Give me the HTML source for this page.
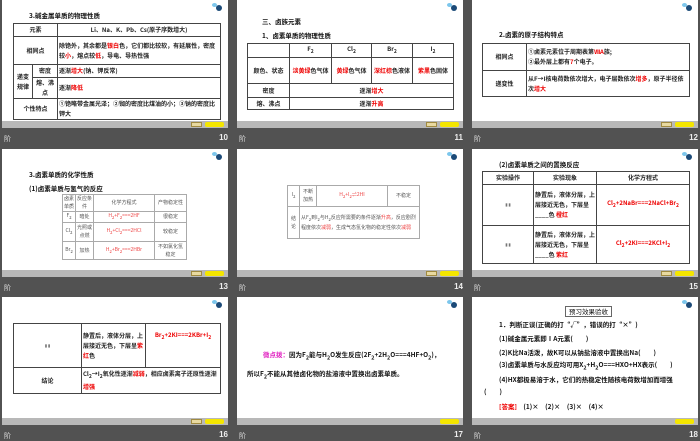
<!DOCTYPE html>
<html><head><meta charset="utf-8">
<style>
*{margin:0;padding:0;box-sizing:border-box}
body{width:700px;height:437px;background:#525252;position:relative;overflow:hidden;font-family:"Liberation Sans","Noto Sans CJK SC",sans-serif;}
.s{position:absolute;width:226px;height:128px;background:#fff;overflow:hidden}
.bar{position:absolute;left:0;bottom:0;width:100%;height:7px;background:#b8b8b8}
.b1{position:absolute;right:26px;bottom:1px;width:11px;height:5px;background:#e8d9a0;border:1px solid #a08a40}
.b2{position:absolute;right:4px;bottom:1px;width:19px;height:5px;background:#f4e600;border-radius:2px}
.ic{position:absolute;right:6px;top:5px;width:6px;height:6px;border-radius:50%;background:#1b4a78}
.ic2{position:absolute;right:11px;top:3px;width:5px;height:4px;border-radius:50%;background:#7cc6ec}
.lb{position:absolute;color:#ddd;font-size:7px}
.nm{position:absolute;color:#eee;font-size:8px;font-weight:bold;text-align:right;width:30px}
.t{position:absolute;font-size:6.5px;line-height:1;font-weight:bold;color:#111;white-space:nowrap;font-family:"Noto Sans CJK SC",sans-serif}
table{position:absolute;border-collapse:collapse;font-size:6px;font-weight:bold;color:#222;font-family:"Noto Sans CJK SC",sans-serif}
td{border:1px solid #444;text-align:center;line-height:10px;padding:0 1px}
.r{color:#e00;font-weight:bold}
.l{text-align:left}
.thin td{border:1px solid #aaa;color:#555;font-size:5px;font-weight:normal;line-height:8px}
</style></head><body>

<!-- slide 10 -->
<div class="s" style="left:2px;top:0">
<div class="ic2"></div><div class="ic"></div>
<div class="t" style="left:27px;top:12px">3.碱金属单质的物理性质</div>
<table style="left:11px;top:23px;width:208px;height:95px">
<tr style="height:13px"><td colspan="2" style="width:50px">元素</td><td>Li、Na、K、Pb、Cs(原子序数增大)</td></tr>
<tr style="height:28px"><td colspan="2">相同点</td><td class="l">除铯外，其余都是<span class="r">银白</span>色，它们都比较软，有延展性，密度较<span class="r">小</span>，熔点较<span class="r">低</span>，导电、导热性强</td></tr>
<tr style="height:13px"><td rowspan="2" style="width:19px">递变规律</td><td>密度</td><td class="l">逐渐<span class="r">增大</span>(钠、钾反常)</td></tr>
<tr style="height:13px"><td>熔、沸点</td><td class="l">逐渐<span class="r">降低</span></td></tr>
<tr><td colspan="2">个性特点</td><td class="l">①铯略带金属光泽；②铷的密度比煤油的小；③钠的密度比钾大</td></tr>
</table>
<div class="bar"><div class="b1"></div><div class="b2"></div></div>
</div>
<div class="lb" style="left:4px;top:134px">阶</div><div class="nm" style="left:198px;top:133px">10</div>

<!-- slide 11 -->
<div class="s" style="left:237px;top:0">
<div class="ic2"></div><div class="ic"></div>
<div class="t" style="left:25px;top:18px">三、卤族元素</div>
<div class="t" style="left:25px;top:32px">1、卤素单质的物理性质</div>
<table style="left:10px;top:43px;width:207px;height:67px">
<tr style="height:14px"><td style="width:42px"></td><td style="width:42px">F<sub>2</sub></td><td style="width:40px">Cl<sub>2</sub></td><td style="width:41px">Br<sub>2</sub></td><td>I<sub>2</sub></td></tr>
<tr style="height:26px"><td>颜色、状态</td><td><span class="r">淡黄绿</span>色气体</td><td><span class="r">黄绿</span>色气体</td><td><span class="r">深红棕</span>色液体</td><td><span class="r">紫黑</span>色固体</td></tr>
<tr style="height:14px"><td>密度</td><td colspan="4">逐渐<span class="r">增大</span></td></tr>
<tr><td>熔、沸点</td><td colspan="4">逐渐<span class="r">升高</span></td></tr>
</table>
<div class="bar"><div class="b1"></div><div class="b2"></div></div>
</div>
<div class="lb" style="left:239px;top:134px">阶</div><div class="nm" style="left:433px;top:133px">11</div>

<!-- slide 12 -->
<div class="s" style="left:472px;top:0">
<div class="ic2"></div><div class="ic"></div>
<div class="t" style="left:27px;top:31px">2.卤素的原子结构特点</div>
<table style="left:10px;top:43px;width:208px;height:54px">
<tr style="height:27px"><td style="width:44px">相同点</td><td class="l">①卤素元素位于周期表第<span class="r">ⅦA</span>族;<br>②最外层上都有<span class="r">7</span>个电子。</td></tr>
<tr><td>递变性</td><td class="l">从F→I核电荷数依次增大，电子层数依次<span class="r">增多</span>，原子半径依次<span class="r">增大</span></td></tr>
</table>
<div class="bar"><div class="b1"></div><div class="b2"></div></div>
</div>
<div class="lb" style="left:474px;top:134px">阶</div><div class="nm" style="left:668px;top:133px">12</div>

<!-- slide 13 -->
<div class="s" style="left:2px;top:149px">
<div class="ic2"></div><div class="ic"></div>
<div class="t" style="left:27px;top:22px">3.卤素单质的化学性质</div>
<div class="t" style="left:27px;top:36px">(1)卤素单质与氢气的反应</div>
<table class="thin" style="left:60px;top:45px;width:125px;height:66px">
<tr style="height:16px"><td style="width:13px">卤素单质</td><td style="width:18px">反应条件</td><td style="width:61px">化学方程式</td><td>产物稳定性</td></tr>
<tr style="height:11px"><td>F<sub>2</sub></td><td>暗处</td><td style="color:#e44">H<sub>2</sub>+F<sub>2</sub>===2HF</td><td>很稳定</td></tr>
<tr style="height:19px"><td>Cl<sub>2</sub></td><td>光照或点燃</td><td style="color:#e44">H<sub>2</sub>+Cl<sub>2</sub>===2HCl</td><td>较稳定</td></tr>
<tr><td>Br<sub>2</sub></td><td>加热</td><td style="color:#e44">H<sub>2</sub>+Br<sub>2</sub>===2HBr</td><td>不如氯化氢稳定</td></tr>
</table>
<div class="bar"><div class="b1"></div><div class="b2"></div></div>
</div>
<div class="lb" style="left:4px;top:283px">阶</div><div class="nm" style="left:198px;top:282px">13</div>

<!-- slide 14 -->
<div class="s" style="left:237px;top:149px">
<div class="ic2"></div><div class="ic"></div>
<table class="thin" style="left:50px;top:36px;width:133px;height:54px">
<tr style="height:21px"><td style="width:12px">I<sub>2</sub></td><td style="width:17px">不断加热</td><td style="width:71px;color:#e44">H<sub>2</sub>+I<sub>2</sub>⇌2HI</td><td>不稳定</td></tr>
<tr><td>结论</td><td colspan="3" class="l">从F<sub>2</sub>到I<sub>2</sub>与H<sub>2</sub>反应所需要的条件逐渐<span style="color:#e44">升高</span>，反应剧烈程度依次<span style="color:#e44">减弱</span>，生成气态氢化物的稳定性依次<span style="color:#e44">减弱</span></td></tr>
</table>
<div class="bar"><div class="b1"></div><div class="b2"></div></div>
</div>
<div class="lb" style="left:239px;top:283px">阶</div><div class="nm" style="left:433px;top:282px">14</div>

<!-- slide 15 -->
<div class="s" style="left:472px;top:149px">
<div class="ic2"></div><div class="ic"></div>
<div class="t" style="left:27px;top:12px">(2)卤素单质之间的置换反应</div>
<table style="left:10px;top:22px;width:208px;height:93px">
<tr style="height:13px"><td style="width:51px">实验操作</td><td style="width:63px">实验现象</td><td>化学方程式</td></tr>
<tr style="height:41px"><td style="font-size:4px;color:#777">▮ ▮</td><td class="l">静置后，液体分层，上层接近无色，下层呈____色 <span class="r">橙红</span></td><td class="r">Cl<sub>2</sub>+2NaBr===2NaCl+Br<sub>2</sub></td></tr>
<tr><td style="font-size:4px;color:#777">▮ ▮</td><td class="l">静置后，液体分层，上层接近无色，下层呈____色 <span class="r">紫红</span></td><td class="r">Cl<sub>2</sub>+2KI===2KCl+I<sub>2</sub></td></tr>
</table>
<div class="bar"><div class="b1"></div><div class="b2"></div></div>
</div>
<div class="lb" style="left:474px;top:283px">阶</div><div class="nm" style="left:668px;top:282px">15</div>

<!-- slide 16 -->
<div class="s" style="left:2px;top:297px">
<div class="ic2"></div><div class="ic"></div>
<table style="left:11px;top:26px;width:208px;height:71px">
<tr style="height:44px"><td style="width:68px;font-size:4px;color:#777">▮ ▮</td><td class="l" style="width:64px">静置后，液体分层，上层接近无色，下层呈<span class="r">紫红</span>色</td><td class="r" style="vertical-align:top;padding-top:6px">Br<sub>2</sub>+2KI===2KBr+I<sub>2</sub></td></tr>
<tr><td>结论</td><td colspan="2" class="l">Cl<sub>2</sub>→I<sub>2</sub>氧化性逐渐<span class="r">减弱</span>，相应卤素离子还原性逐渐<span class="r">增强</span></td></tr>
</table>
<div class="bar"><div class="b1"></div><div class="b2"></div></div>
</div>
<div class="lb" style="left:4px;top:431px">阶</div><div class="nm" style="left:198px;top:430px">16</div>

<!-- slide 17 -->
<div class="s" style="left:237px;top:297px">
<div class="ic2"></div><div class="ic"></div>
<div class="t" style="left:26px;top:54px"><span style="color:#e020c0">微点拨：</span>因为F<sub>2</sub>能与H<sub>2</sub>O发生反应(2F<sub>2</sub>+2H<sub>2</sub>O===4HF+O<sub>2</sub>)，</div>
<div class="t" style="left:10px;top:73px">所以F<sub>2</sub>不能从其他卤化物的盐溶液中置换出卤素单质。</div>
<div class="bar"><div class="b2"></div></div>
</div>
<div class="lb" style="left:239px;top:431px">阶</div><div class="nm" style="left:433px;top:430px">17</div>

<!-- slide 18 -->
<div class="s" style="left:472px;top:297px">
<div class="ic2"></div><div class="ic"></div>
<div class="t" style="left:93px;top:9px;border:1px solid #666;padding:1px 3px;font-weight:normal">预习效果验收</div>
<div class="t" style="left:27px;top:24px">1．判断正误(正确的打“√”，错误的打“×”)</div>
<div class="t" style="left:27px;top:38px">(1)碱金属元素即ⅠA元素(　　)</div>
<div class="t" style="left:27px;top:52px">(2)K比Na活泼，故K可以从钠盐溶液中置换出Na(　　)</div>
<div class="t" style="left:27px;top:64px">(3)卤素单质与水反应均可用X<sub>2</sub>+H<sub>2</sub>O===HXO+HX表示(　　)</div>
<div class="t" style="left:27px;top:79px">(4)HX都极易溶于水，它们的热稳定性随核电荷数增加而增强</div>
<div class="t" style="left:12px;top:91px">(　　)</div>
<div class="t" style="left:27px;top:106px"><span style="color:#e00">[答案]</span>　(1)×　(2)×　(3)×　(4)×</div>
<div class="bar"><div class="b2"></div></div>
</div>
<div class="lb" style="left:474px;top:431px">阶</div><div class="nm" style="left:668px;top:430px">18</div>

</body></html>
